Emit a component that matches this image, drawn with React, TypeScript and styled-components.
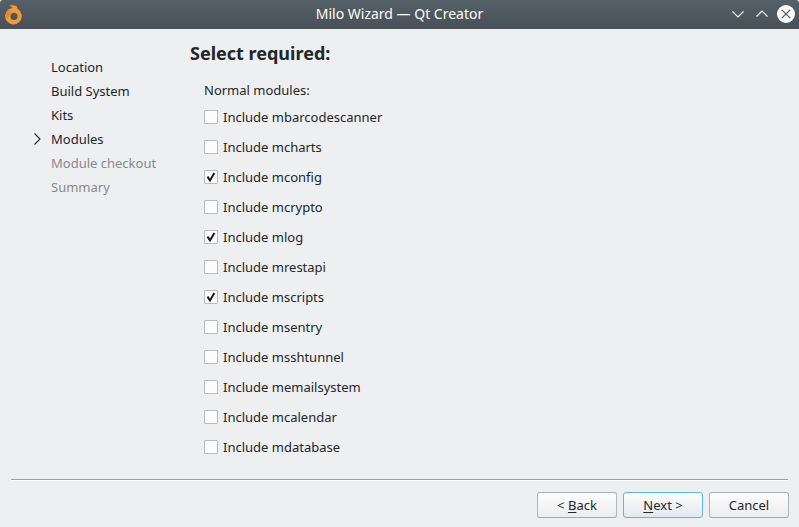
import React, { useState } from "react";
import styled, { createGlobalStyle } from "styled-components";

const GlobalStyle = createGlobalStyle`
  *, *::before, *::after { box-sizing: border-box; }
  body { margin: 0; }
`;

const Window = styled.div`
  width: 799px;
  height: 527px;
  display: flex;
  flex-direction: column;
  overflow: hidden;
  background: #eeeff1;
  color: #232629;
  font-family: "Noto Sans", sans-serif;
  font-size: 13px;
  line-height: 18px;
  white-space: nowrap;
`;

const TitleBar = styled.header`
  height: 29px;
  flex: none;
  display: grid;
  grid-template-columns: 80px 1fr 80px;
  align-items: center;
  background: linear-gradient(#566068, #475057);
  border-radius: 3px 3px 0 0;
  color: #fcfcfc;
`;

const AppIcon = styled.svg`
  width: 20px;
  height: 22px;
  margin: -2px 0 0 4px;
`;

const WindowTitle = styled.h1`
  margin: 0 0 1px;
  font-size: 14px;
  font-weight: 400;
  line-height: 26px;
  text-align: center;
`;

const WindowControls = styled.div`
  display: flex;
  justify-content: flex-end;
  gap: 4px;
  padding: 0 3px 1px 0;
`;

const ControlIcon = styled.svg`
  width: 20px;
  height: 20px;
  flex: none;
  fill: none;
`;

const Content = styled.div`
  height: 450px;
  flex: none;
  display: flex;
`;

const Steps = styled.ol`
  width: 190px;
  margin: 0;
  padding: 26px 0 0 33px;
  list-style: none;
`;

const Step = styled.li<{ $pending: boolean }>`
  height: 24px;
  display: grid;
  grid-template-columns: 18px 1fr;
  align-items: center;
  color: ${(p) => (p.$pending ? "#888a8c" : "#232629")};
`;

const StepArrow = styled.svg`
  grid-column: 1;
  width: 9px;
  height: 12px;
  fill: none;
  stroke: #232629;
  stroke-width: 1.1;
`;

const StepLabel = styled.span`
  grid-column: 2;
`;

const Page = styled.main`
  flex: 1;
  padding-top: 12px;
`;

const PageTitle = styled.h2`
  margin: 0;
  font-size: 18px;
  line-height: 25px;
  font-weight: 700;
`;

const ModuleGroup = styled.div`
  padding: 15px 0 0 14px;
`;

const GroupLabel = styled.div`
  height: 21px;
`;

const ModuleRow = styled.label`
  height: 30px;
  display: flex;
  align-items: center;
  gap: 5px;
`;

const CheckBox = styled.input`
  appearance: none;
  width: 14px;
  height: 14px;
  margin: 0;
  border: 1px solid #b9bbbd;
  border-radius: 1px;
  background: #fcfcfc;
`;

const CheckCell = styled.span`
  display: grid;
  width: 14px;
  height: 14px;
  > * { grid-area: 1 / 1; }
`;

const CheckMark = styled.svg`
  width: 14px;
  height: 14px;
  fill: none;
  stroke: #17191b;
  stroke-width: 2;
  pointer-events: none;
`;

const Separator = styled.hr`
  width: 777px;
  height: 2px;
  flex: none;
  margin: 0 0 0 11px;
  border: 0;
  border-top: 1px solid #9b9c9e;
  background: #fff;
`;

const Footer = styled.footer`
  display: flex;
  justify-content: flex-end;
  gap: 6px;
  padding: 11px 10px 0 0;
`;

const Button = styled.button<{ $primary?: boolean }>`
  width: 80px;
  height: 26px;
  padding: 0;
  border: 1px solid ${(p) => (p.$primary ? "#5fb5e3" : "#b1b2b4")};
  border-bottom-color: ${(p) => (p.$primary ? "#5fb5e3" : "#a5a6a8")};
  border-radius: 3px;
  background: ${(p) =>
    p.$primary ? "linear-gradient(#fcfdfd, #e2e9ef)" : "linear-gradient(#fdfdfd, #ededee)"};
  color: #232629;
  font: inherit;
`;

const Mnemonic = styled.span`
  text-decoration: underline;
  text-decoration-thickness: 1px;
  text-underline-offset: 2px;
  text-decoration-skip-ink: none;
`;

const steps = ["Location", "Build System", "Kits", "Modules", "Module checkout", "Summary"];
const currentStep = 3;

const modules = [
  "mbarcodescanner", "mcharts", "mconfig", "mcrypto", "mlog", "mrestapi",
  "mscripts", "msentry", "msshtunnel", "memailsystem", "mcalendar", "mdatabase",
];

export default function App() {
  const [selected, setSelected] = useState(["mconfig", "mlog", "mscripts"]);
  const toggle = (name: string) =>
    setSelected((s) => (s.includes(name) ? s.filter((n) => n !== name) : [...s, name]));

  return (
    <Window>
      <GlobalStyle />
      <TitleBar>
        <AppIcon viewBox="0 0 20 22">
          <path
            fill="#f39a36"
            fillRule="evenodd"
            d="M5.6 2 10.6 2.4Q13.6 3 13.4 5.8A8.3 8.3 0 1 1 5.1 6L8.6 5.1ZM10 9.7A3.6 3.6 0 1 0 10 16.9A3.6 3.6 0 1 0 10 9.7Z"
          />
          <path fill="#ed872f" d="M1.8 13A8.3 8.3 0 0 1 5.1 6.4L8.6 10A3.6 3.6 0 0 0 6.4 13.3L2 15.7Z" />
        </AppIcon>
        <WindowTitle>Milo Wizard — Qt Creator</WindowTitle>
        <WindowControls>
          <ControlIcon viewBox="0 0 20 20" stroke="#fcfcfc" strokeWidth="1.15">
            <path d="m4.5 7.5 5.5 5.5 5.5-5.5" />
          </ControlIcon>
          <ControlIcon viewBox="0 0 20 20" stroke="#fcfcfc" strokeWidth="1.15">
            <path d="m4.5 12.5 5.5-5.5 5.5 5.5" />
          </ControlIcon>
          <ControlIcon viewBox="0 0 20 20">
            <circle cx="10" cy="10" r="9" fill="#fcfcfc" />
            <path d="m5.8 5.8 8.4 8.4m0-8.4-8.4 8.4" stroke="#4b555d" strokeWidth="1.2" />
          </ControlIcon>
        </WindowControls>
      </TitleBar>
      <Content>
        <Steps>
          {steps.map((step, i) => (
            <Step key={step} $pending={i > currentStep}>
              {i === currentStep && (
                <StepArrow viewBox="0 0 9 12">
                  <path d="m1.5.5 5.5 5.5-5.5 5.5" />
                </StepArrow>
              )}
              <StepLabel>{step}</StepLabel>
            </Step>
          ))}
        </Steps>
        <Page>
          <PageTitle>Select required:</PageTitle>
          <ModuleGroup>
            <GroupLabel>Normal modules:</GroupLabel>
            {modules.map((name) => (
              <ModuleRow key={name}>
                <CheckCell>
                  <CheckBox
                    type="checkbox"
                    checked={selected.includes(name)}
                    onChange={() => toggle(name)}
                  />
                  {selected.includes(name) && (
                    <CheckMark viewBox="0 0 14 14">
                      <path d="M3.5 6.6 6 10.4 10.4 3" />
                    </CheckMark>
                  )}
                </CheckCell>
                Include {name}
              </ModuleRow>
            ))}
          </ModuleGroup>
        </Page>
      </Content>
      <Separator />
      <Footer>
        <Button>&lt; <Mnemonic>B</Mnemonic>ack</Button>
        <Button $primary><Mnemonic>N</Mnemonic>ext &gt;</Button>
        <Button>Cancel</Button>
      </Footer>
    </Window>
  );
}
